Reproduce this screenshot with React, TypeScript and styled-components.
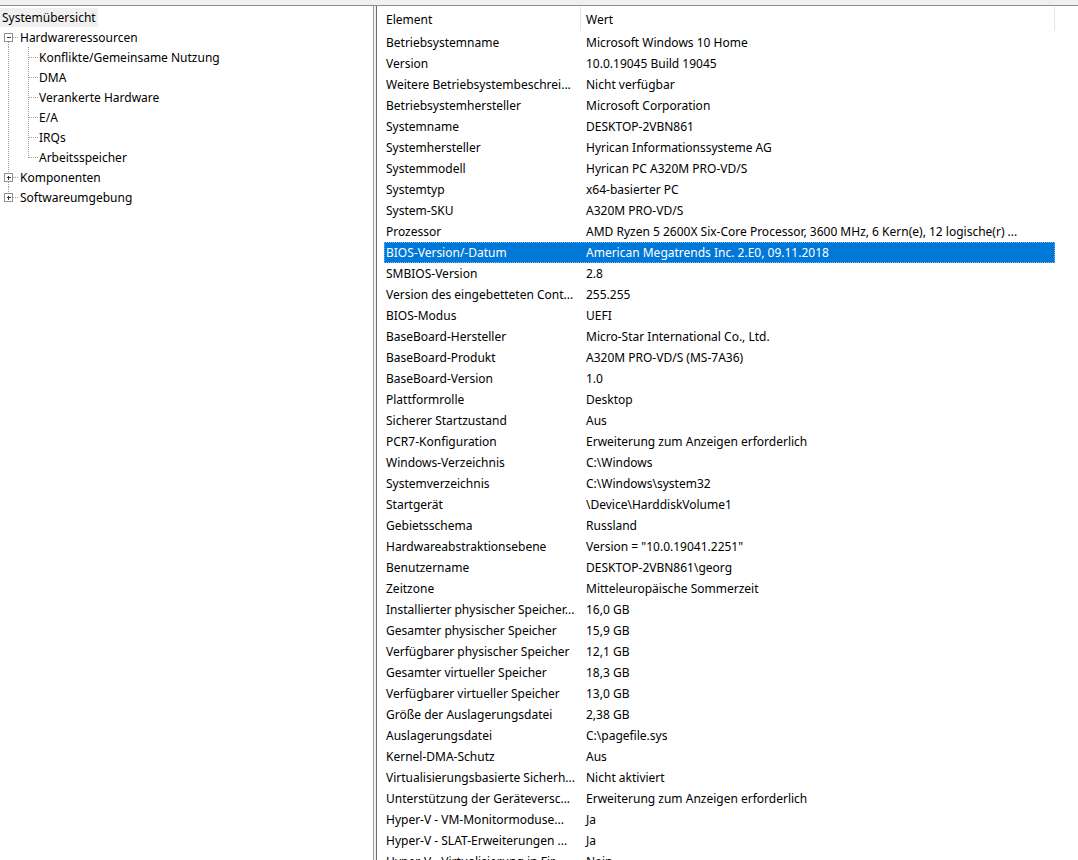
import React from 'react';
import styled, { createGlobalStyle } from 'styled-components';

const GlobalStyle = createGlobalStyle`
    html, body {
        margin: 0;
        padding: 0;
        height: 100%;
        overflow: hidden;
        background: #ffffff;
    }
    body {
        font-family: "Noto Sans", "Open Sans", sans-serif;
        font-size: 12px;
        color: #000000;
    }
`;

const Window = styled.div`
    width: 100vw;
    height: 100vh;
    display: flex;
    flex-direction: column;
    overflow: hidden;
`;

const TopStrip = styled.div`
    height: 5px;
    flex-shrink: 0;
    background: #f0f0f0;
    border-bottom: 1px solid #8c8c8c;
`;

const Main = styled.div`
    flex: 1;
    display: flex;
    min-height: 0;
`;

const TreePane = styled.div`
    width: 373px;
    flex-shrink: 0;
    border-right: 1px solid #a0a0a0;
    padding-top: 1px;
    background: #ffffff;
`;

const Splitter = styled.div`
    width: 2px;
    flex-shrink: 0;
    background: #f0f0f0;
`;

const ListPane = styled.div`
    flex: 1;
    border-left: 1px solid #6e6e6e;
    background: #ffffff;
    overflow: hidden;
    display: flex;
    flex-direction: column;
`;

/* ---------- tree ---------- */

const TreeRow = styled.div`
    height: 20px;
    display: flex;
    align-items: center;
    white-space: nowrap;
`;

const TreeLabel = styled.span<{ $selected?: boolean }>`
    line-height: 19px;
    padding: 0 2px 0 ${(p) => (p.$selected ? '2px' : '1px')};
    background: ${(p) => (p.$selected ? '#f0f0f0' : 'transparent')};
`;

type Guide = {
    outer?: 'full' | 'top' | 'bottom' | 'around';
    box?: '+' | '-';
    child?: 'full' | 'last';
};

const DOT = '#a0a0a0';

const Guides = ({ outer, box, child }: Guide) => {
    const w = child ? 38 : 19;
    return (
        <svg width={w} height={20} style={{ flexShrink: 0, display: 'block' }} shapeRendering="crispEdges">
            {outer === 'full' && <line x1={8.5} y1={0} x2={8.5} y2={20} stroke={DOT} strokeDasharray="1 1" />}
            {(outer === 'top' || outer === 'around') && (
                <line x1={8.5} y1={0} x2={8.5} y2={6} stroke={DOT} strokeDasharray="1 1" />
            )}
            {(outer === 'bottom' || outer === 'around') && (
                <line x1={8.5} y1={15} x2={8.5} y2={20} stroke={DOT} strokeDasharray="1 1" />
            )}
            {box && (
                <g>
                    <line x1={13} y1={10.5} x2={19} y2={10.5} stroke={DOT} strokeDasharray="1 1" />
                    <rect x={4.5} y={6.5} width={8} height={8} fill="#ffffff" stroke="#919191" />
                    <line x1={6.5} y1={10.5} x2={11} y2={10.5} stroke="#3a3a3a" />
                    {box === '+' && <line x1={8.5} y1={8.5} x2={8.5} y2={13} stroke="#3a3a3a" />}
                </g>
            )}
            {child && (
                <g>
                    <line
                        x1={28.5}
                        y1={0}
                        x2={28.5}
                        y2={child === 'last' ? 11 : 20}
                        stroke={DOT}
                        strokeDasharray="1 1"
                    />
                    <line x1={29} y1={10.5} x2={38} y2={10.5} stroke={DOT} strokeDasharray="1 1" />
                </g>
            )}
        </svg>
    );
};

const children = ['Konflikte/Gemeinsame Nutzung', 'DMA', 'Verankerte Hardware', 'E/A', 'IRQs', 'Arbeitsspeicher'];

const Tree = () => (
    <TreePane>
        <TreeRow>
            <TreeLabel $selected>Systemübersicht</TreeLabel>
        </TreeRow>
        <TreeRow>
            <Guides outer="bottom" box="-" />
            <TreeLabel>Hardwareressourcen</TreeLabel>
        </TreeRow>
        {children.map((c, i) => (
            <TreeRow key={c}>
                <Guides outer="full" child={i === children.length - 1 ? 'last' : 'full'} />
                <TreeLabel>{c}</TreeLabel>
            </TreeRow>
        ))}
        <TreeRow>
            <Guides outer="around" box="+" />
            <TreeLabel>Komponenten</TreeLabel>
        </TreeRow>
        <TreeRow>
            <Guides outer="top" box="+" />
            <TreeLabel>Softwareumgebung</TreeLabel>
        </TreeRow>
    </TreePane>
);

/* ---------- list ---------- */

const Header = styled.div`
    height: 24px;
    margin-top: 1px;
    padding-left: 3px;
    display: flex;
    flex-shrink: 0;
`;

const HeaderCell = styled.div<{ $width: number }>`
    width: ${(p) => p.$width}px;
    padding-left: ${(p) => (p.$width > 300 ? 5 : 6)}px;
    box-sizing: border-box;
    border-right: 1px solid #e5e5e5;
    display: flex;
    align-items: center;
`;

const Rows = styled.div`
    padding-left: 7px;
    padding-top: 1px;
`;

const Row = styled.div<{ $selected?: boolean }>`
    width: 671px;
    height: 21px;
    box-sizing: border-box;
    display: grid;
    grid-template-columns: 200px 471px;
    align-items: center;
    background: ${(p) => (p.$selected ? '#0078d7' : 'transparent')};
    color: ${(p) => (p.$selected ? '#ffffff' : '#000000')};
    outline: ${(p) => (p.$selected ? '1px dotted #7fb6e8' : 'none')};
    outline-offset: -1px;
`;

const Cell = styled.span`
    padding-left: 2px;
    white-space: nowrap;
    overflow: hidden;
`;

const data: [string, string][] = [
    ['Betriebsystemname', 'Microsoft Windows 10 Home'],
    ['Version', '10.0.19045 Build 19045'],
    ['Weitere Betriebsystembeschrei...', 'Nicht verfügbar'],
    ['Betriebsystemhersteller', 'Microsoft Corporation'],
    ['Systemname', 'DESKTOP-2VBN861'],
    ['Systemhersteller', 'Hyrican Informationssysteme AG'],
    ['Systemmodell', 'Hyrican PC A320M PRO-VD/S'],
    ['Systemtyp', 'x64-basierter PC'],
    ['System-SKU', 'A320M PRO-VD/S'],
    ['Prozessor', 'AMD Ryzen 5 2600X Six-Core Processor, 3600 MHz, 6 Kern(e), 12 logische(r) ...'],
    ['BIOS-Version/-Datum', 'American Megatrends Inc. 2.E0, 09.11.2018'],
    ['SMBIOS-Version', '2.8'],
    ['Version des eingebetteten Cont...', '255.255'],
    ['BIOS-Modus', 'UEFI'],
    ['BaseBoard-Hersteller', 'Micro-Star International Co., Ltd.'],
    ['BaseBoard-Produkt', 'A320M PRO-VD/S (MS-7A36)'],
    ['BaseBoard-Version', '1.0'],
    ['Plattformrolle', 'Desktop'],
    ['Sicherer Startzustand', 'Aus'],
    ['PCR7-Konfiguration', 'Erweiterung zum Anzeigen erforderlich'],
    ['Windows-Verzeichnis', 'C:\\Windows'],
    ['Systemverzeichnis', 'C:\\Windows\\system32'],
    ['Startgerät', '\\Device\\HarddiskVolume1'],
    ['Gebietsschema', 'Russland'],
    ['Hardwareabstraktionsebene', 'Version = "10.0.19041.2251"'],
    ['Benutzername', 'DESKTOP-2VBN861\\georg'],
    ['Zeitzone', 'Mitteleuropäische Sommerzeit'],
    ['Installierter physischer Speicher...', '16,0 GB'],
    ['Gesamter physischer Speicher', '15,9 GB'],
    ['Verfügbarer physischer Speicher', '12,1 GB'],
    ['Gesamter virtueller Speicher', '18,3 GB'],
    ['Verfügbarer virtueller Speicher', '13,0 GB'],
    ['Größe der Auslagerungsdatei', '2,38 GB'],
    ['Auslagerungsdatei', 'C:\\pagefile.sys'],
    ['Kernel-DMA-Schutz', 'Aus'],
    ['Virtualisierungsbasierte Sicherh...', 'Nicht aktiviert'],
    ['Unterstützung der Geräteversc...', 'Erweiterung zum Anzeigen erforderlich'],
    ['Hyper-V - VM-Monitormoduse...', 'Ja'],
    ['Hyper-V - SLAT-Erweiterungen ...', 'Ja'],
    ['Hyper-V - Virtualisierung in Fir...', 'Nein'],
];

const SELECTED = 10;

const App = () => (
    <Window>
        <GlobalStyle />
        <TopStrip />
        <Main>
            <Tree />
            <Splitter />
            <ListPane>
                <Header>
                    <HeaderCell $width={201}>Element</HeaderCell>
                    <HeaderCell $width={474}>Wert</HeaderCell>
                </Header>
                <Rows>
                    {data.map(([k, v], i) => (
                        <Row key={k} $selected={i === SELECTED}>
                            <Cell>{k}</Cell>
                            <Cell>{v}</Cell>
                        </Row>
                    ))}
                </Rows>
            </ListPane>
        </Main>
    </Window>
);

export default App;
